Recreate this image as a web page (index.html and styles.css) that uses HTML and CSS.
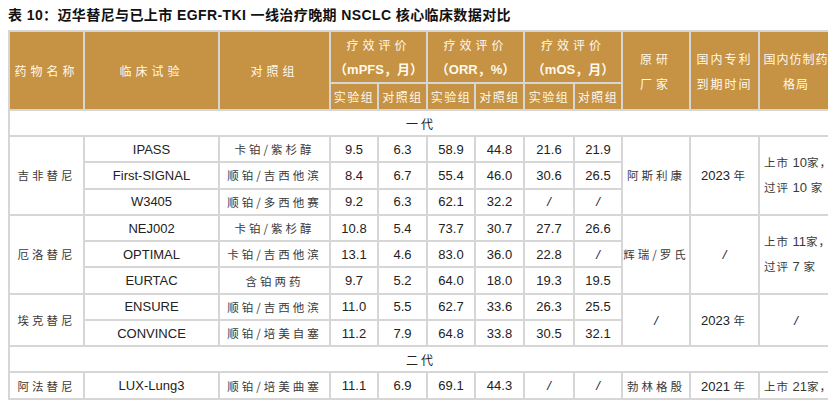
FILE: index.html
```html
<!DOCTYPE html>
<html lang="zh-CN">
<head>
<meta charset="utf-8">
<title>表10</title>
<link rel="stylesheet" href="styles.css">
</head>
<body>
<div class="page">
  <h1 class="title">表 10：迈华替尼与已上市 EGFR-TKI 一线治疗晚期 NSCLC 核心临床数据对比</h1>
  <table class="data">
    <colgroup>
      <col style="width:75px"><col style="width:135px"><col style="width:111px">
      <col style="width:48px"><col style="width:49px"><col style="width:48px"><col style="width:49px">
      <col style="width:50px"><col style="width:48px"><col style="width:68px"><col style="width:69px"><col style="width:74px">
    </colgroup>
    <thead>
      <tr class="h1">
        <th rowspan="2" class="zh">药物名称</th>
        <th rowspan="2" class="zh">临床试验</th>
        <th rowspan="2" class="zh">对照组</th>
        <th colspan="2" class="grp"><span class="zh">疗效评价</span><span class="lat">（mPFS，月）</span></th>
        <th colspan="2" class="grp"><span class="zh">疗效评价</span><span class="lat">（ORR，%）</span></th>
        <th colspan="2" class="grp"><span class="zh">疗效评价</span><span class="lat">（mOS，月）</span></th>
        <th rowspan="2" class="zh two"><span class="ln">原研</span><span class="ln">厂家</span></th>
        <th rowspan="2" class="zh two tight"><span class="ln">国内专利</span><span class="ln">到期时间</span></th>
        <th rowspan="2" class="zh two tighter"><span class="ln">国内仿制药</span><span class="ln">格局</span></th>
      </tr>
      <tr class="h2">
        <th class="sub">实验组</th><th class="sub">对照组</th>
        <th class="sub">实验组</th><th class="sub">对照组</th>
        <th class="sub">实验组</th><th class="sub">对照组</th>
      </tr>
    </thead>
    <tbody>
      <tr class="gen"><td colspan="12">一代</td></tr>
      <tr>
        <td rowspan="3" class="zh">吉非替尼</td>
        <td>IPASS</td><td class="zh">卡铂/紫杉醇</td>
        <td>9.5</td><td>6.3</td><td>58.9</td><td>44.8</td><td>21.6</td><td>21.9</td>
        <td rowspan="3" class="zh">阿斯利康</td>
        <td rowspan="3">2023 <span class="zh">年</span></td>
        <td rowspan="3" class="zh last"><span class="ln">上市 <span class="num">10</span>家，</span><span class="ln">过评 <span class="num">10</span> 家</span></td>
      </tr>
      <tr>
        <td>First-SIGNAL</td><td class="zh">顺铂/吉西他滨</td>
        <td>8.4</td><td>6.7</td><td>55.4</td><td>46.0</td><td>30.6</td><td>26.5</td>
      </tr>
      <tr>
        <td>W3405</td><td class="zh">顺铂/多西他赛</td>
        <td>9.2</td><td>6.3</td><td>62.1</td><td>32.2</td><td class="sl">/</td><td class="sl">/</td>
      </tr>
      <tr>
        <td rowspan="3" class="zh">厄洛替尼</td>
        <td>NEJ002</td><td class="zh">卡铂/紫杉醇</td>
        <td>10.8</td><td>5.4</td><td>73.7</td><td>30.7</td><td>27.7</td><td>26.6</td>
        <td rowspan="3" class="zh">辉瑞/罗氏</td>
        <td rowspan="3" class="sl">/</td>
        <td rowspan="3" class="zh last"><span class="ln">上市 <span class="num">11</span>家，</span><span class="ln">过评 <span class="num">7</span> 家</span></td>
      </tr>
      <tr>
        <td>OPTIMAL</td><td class="zh">卡铂/吉西他滨</td>
        <td>13.1</td><td>4.6</td><td>83.0</td><td>36.0</td><td>22.8</td><td class="sl">/</td>
      </tr>
      <tr>
        <td>EURTAC</td><td class="zh">含铂两药</td>
        <td>9.7</td><td>5.2</td><td>64.0</td><td>18.0</td><td>19.3</td><td>19.5</td>
      </tr>
      <tr>
        <td rowspan="2" class="zh">埃克替尼</td>
        <td>ENSURE</td><td class="zh">顺铂/吉西他滨</td>
        <td>11.0</td><td>5.5</td><td>62.7</td><td>33.6</td><td>26.3</td><td>25.5</td>
        <td rowspan="2" class="sl">/</td>
        <td rowspan="2">2023 <span class="zh">年</span></td>
        <td rowspan="2" class="sl">/</td>
      </tr>
      <tr>
        <td>CONVINCE</td><td class="zh">顺铂/培美自塞</td>
        <td>11.2</td><td>7.9</td><td>64.8</td><td>33.8</td><td>30.5</td><td>32.1</td>
      </tr>
      <tr class="gen"><td colspan="12">二代</td></tr>
      <tr>
        <td class="zh">阿法替尼</td>
        <td>LUX-Lung3</td><td class="zh">顺铂/培美曲塞</td>
        <td>11.1</td><td>6.9</td><td>69.1</td><td>44.3</td><td class="sl">/</td><td class="sl">/</td>
        <td class="zh">勃林格殷</td>
        <td>2021 <span class="zh">年</span></td>
        <td class="zh last">上市 <span class="num">21</span>家，</td>
      </tr>
    </tbody>
  </table>
</div>
</body>
</html>
```

FILE: styles.css
```css
html, body {
  margin: 0;
  padding: 0;
  background: #ffffff;
  overflow: hidden;
}

.page {
  padding: 0 0 0 8px;
  width: 830px;
}

.title {
  margin: 0;
  height: 30px;
  line-height: 30px;
  font-family: "Liberation Sans", "Noto Sans CJK SC", sans-serif;
  font-size: 14px;
  font-weight: bold;
  color: #111;
  white-space: nowrap;
  letter-spacing: 0.4px;
}

.data {
  border-collapse: collapse;
  table-layout: fixed;
  width: 824px;
  font-family: "Liberation Sans", "Noto Sans CJK SC", sans-serif;
  font-size: 13px;
  color: #222;
}

.data th,
.data td {
  border: 2px solid #d6d6d6;
  padding: 0;
  text-align: center;
  vertical-align: middle;
  white-space: nowrap;
  overflow: hidden;
}

.data th {
  background: #c69243;
  color: #fff9ec;
  font-weight: normal;
  font-size: 12px;
}

.zh {
  font-family: "Noto Sans CJK SC", sans-serif;
  font-size: 11.5px;
  letter-spacing: 3px;
  color: #3a3a3a;
}

.data th.zh,
.data th .zh {
  color: #fff9ec;
  font-size: 12px;
  letter-spacing: 4px;
}

.data th.tight {
  letter-spacing: 2px;
}

.data th.tighter {
  letter-spacing: 1px;
}

.num {
  font-family: "Liberation Sans", sans-serif;
  font-size: 13px;
  letter-spacing: 0;
}

.h1 th {
  height: 49px;
}

.h2 th {
  height: 25px;
}

.grp .zh,
.grp .lat {
  display: block;
  line-height: 25px;
}

.grp .lat {
  font-family: "Liberation Sans", "Noto Sans CJK SC", sans-serif;
  font-size: 13px;
  font-weight: bold;
  letter-spacing: 0;
}

.two .ln,
.last .ln {
  display: block;
  line-height: 25px;
}

.sub {
  font-family: "Noto Sans CJK SC", sans-serif;
  letter-spacing: 1.5px;
  color: #fff9ec;
}

.data td {
  height: 24.3px;
}

.data td.last {
  text-align: left;
  padding-left: 4px;
  letter-spacing: 1px;
}

.sl {
  font-style: italic;
  font-weight: 300;
}

.gen td {
  font-family: "Noto Sans CJK SC", sans-serif;
  font-size: 12px;
  letter-spacing: 3px;
  color: #222;
  height: 24px;
}
```
